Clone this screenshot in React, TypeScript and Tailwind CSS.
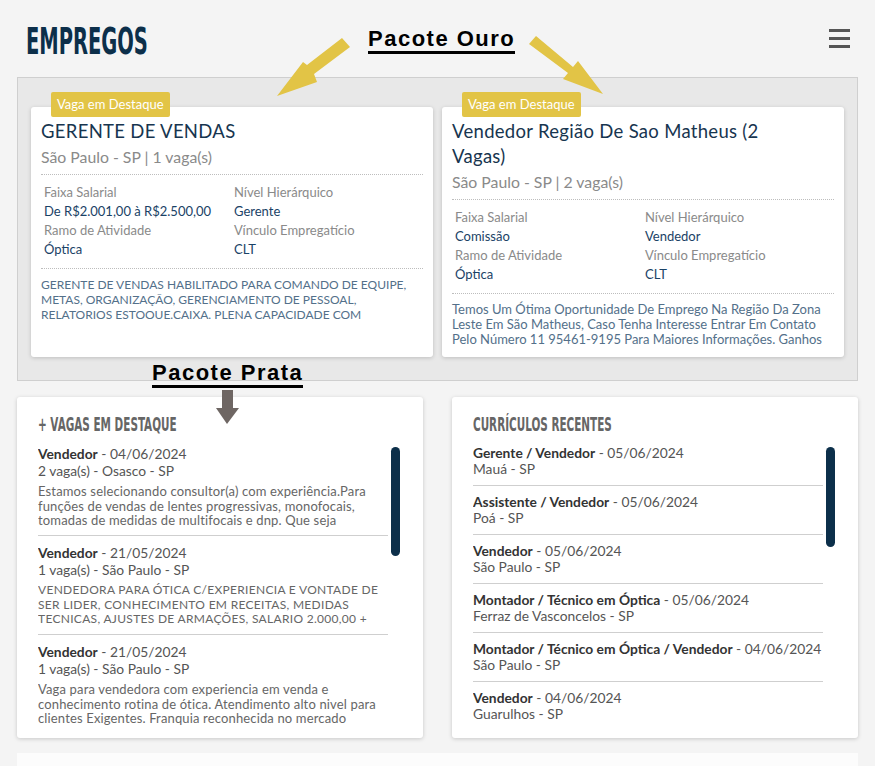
const body = { fontFamily: "Lato, 'Noto Sans', sans-serif" };
const cond = { fontFamily: "'Liberation Sans Narrow', 'DejaVu Sans Condensed', sans-serif" };
const anno = { fontFamily: "'Liberation Sans', Arial, sans-serif" };

type Destaque = {
  title: string[];
  city: string;
  salario: string;
  nivel: string;
  ramo: string;
  vinculo: string;
  desc: string[];
  upper?: boolean;
};

const destaques: Destaque[] = [
  {
    title: ["GERENTE DE VENDAS"],
    city: "São Paulo - SP | 1 vaga(s)",
    salario: "De R$2.001,00 à R$2.500,00",
    nivel: "Gerente",
    ramo: "Óptica",
    vinculo: "CLT",
    upper: true,
    desc: [
      "GERENTE DE VENDAS HABILITADO PARA COMANDO DE EQUIPE,",
      "METAS, ORGANIZAÇÃO, GERENCIAMENTO DE PESSOAL,",
      "RELATORIOS ESTOOUE.CAIXA. PLENA CAPACIDADE COM",
    ],
  },
  {
    title: ["Vendedor Região De Sao Matheus (2", "Vagas)"],
    city: "São Paulo - SP | 2 vaga(s)",
    salario: "Comissão",
    nivel: "Vendedor",
    ramo: "Óptica",
    vinculo: "CLT",
    desc: [
      "Temos Um Ótima Oportunidade De Emprego Na Região Da Zona",
      "Leste Em São Matheus, Caso Tenha Interesse Entrar Em Contato",
      "Pelo Número 11 95461-9195 Para Maiores Informações. Ganhos",
    ],
  },
];

const vagas = [
  {
    cargo: "Vendedor",
    data: "04/06/2024",
    local: "2 vaga(s) - Osasco - SP",
    desc: [
      "Estamos selecionando consultor(a) com experiência.Para",
      "funções de vendas de lentes progressivas, monofocais,",
      "tomadas de medidas de multifocais e dnp. Que seja",
    ],
  },
  {
    cargo: "Vendedor",
    data: "21/05/2024",
    local: "1 vaga(s) - São Paulo - SP",
    upper: true,
    desc: [
      "VENDEDORA PARA ÓTICA C/EXPERIENCIA E VONTADE DE",
      "SER LIDER, CONHECIMENTO EM RECEITAS, MEDIDAS",
      "TECNICAS, AJUSTES DE ARMAÇÕES, SALARIO 2.000,00 +",
    ],
  },
  {
    cargo: "Vendedor",
    data: "21/05/2024",
    local: "1 vaga(s) - São Paulo - SP",
    desc: [
      "Vaga para vendedora com experiencia em venda e",
      "conhecimento rotina de ótica. Atendimento alto nivel para",
      "clientes Exigentes. Franquia reconhecida no mercado",
    ],
  },
];

const curriculos = [
  ["Gerente / Vendedor", "05/06/2024", "Mauá - SP"],
  ["Assistente / Vendedor", "05/06/2024", "Poá - SP"],
  ["Vendedor", "05/06/2024", "São Paulo - SP"],
  ["Montador / Técnico em Óptica", "05/06/2024", "Ferraz de Vasconcelos - SP"],
  ["Montador / Técnico em Óptica / Vendedor", "04/06/2024", "São Paulo - SP"],
  ["Vendedor", "04/06/2024", "Guarulhos - SP"],
];

function DestaqueCard({ d }: { d: Destaque }) {
  return (
    <div className="relative w-[402px] shrink-0 rounded-[3px] bg-white px-[10px] pt-[12px] pb-[10px] shadow-[0_1px_4px_rgba(0,0,0,0.18)]">
      <span className="absolute -top-[15px] left-[20px] flex h-[25px] items-center rounded-[2px] bg-[#e2c446] px-[6px] text-[13px] text-white">
        Vaga em Destaque
      </span>
      {d.title.map((t) => (
        <div key={t} className="text-[18.5px] leading-[25px] tracking-[0.3px] text-[#17354f]">
          {t}
        </div>
      ))}
      <div className="mt-[2px] border-b border-dotted border-[#bdbdbd] pb-[6px] text-[15.8px] leading-[22px] text-[#8a8a8a]">
        {d.city}
      </div>
      <div className="grid grid-cols-[190px_1fr] border-b border-dotted border-[#bdbdbd] px-[3px] pt-[8px] pb-[9px] text-[13px] leading-[19px]">
        <span className="text-[#8a8a8a]">Faixa Salarial</span>
        <span className="text-[#8a8a8a]">Nível Hierárquico</span>
        <span className="text-[#1a4266]">{d.salario}</span>
        <span className="text-[#1a4266]">{d.nivel}</span>
        <span className="text-[#8a8a8a]">Ramo de Atividade</span>
        <span className="text-[#8a8a8a]">Vínculo Empregatício</span>
        <span className="text-[#1a4266]">{d.ramo}</span>
        <span className="text-[#1a4266]">{d.vinculo}</span>
      </div>
      <div className={`pt-[8px] leading-[15px] text-[#53708a] ${d.upper ? "text-[12px]" : "text-[13px]"}`}>
        {d.desc.map((l) => (
          <div key={l} className="whitespace-nowrap">
            {l}
          </div>
        ))}
      </div>
    </div>
  );
}

function ListCard({ title, thumb, children }: { title: string; thumb: string; children: React.ReactNode }) {
  return (
    <div className="flex h-[341px] w-[406px] flex-col rounded-[3px] bg-white pl-[21px] pr-[23px] shadow-[0_1px_4px_rgba(0,0,0,0.18)]">
      <div className="h-[40px] pt-[16px]">
        <span style={cond} className="inline-block origin-left scale-x-[0.61] whitespace-nowrap text-[19px] font-bold leading-[20px] text-[#666]">
          {title}
        </span>
      </div>
      <div className="flex h-[289px] gap-[3px]">
        <div className="h-full w-[350px] overflow-hidden">{children}</div>
        <div className={`mt-[10px] w-[9px] rounded-full bg-[#0c2f4a] ${thumb}`} />
      </div>
    </div>
  );
}

export default function App() {
  return (
    <div style={body} className="relative min-h-[766px] w-full overflow-hidden bg-[#f4f4f4]">
      <header className="flex h-[77px] items-start justify-between pl-[26px] pr-[25px] pt-[21px]">
        <h1 style={cond} className="inline-block origin-left scale-x-[0.57] whitespace-nowrap text-[38px] font-bold leading-[40px] text-[#0c2f4a]">
          EMPREGOS
        </h1>
        <div className="mt-[8px] flex w-[21px] flex-col gap-[5px]">
          <span className="h-[3px] bg-[#555]" />
          <span className="h-[3px] bg-[#555]" />
          <span className="h-[3px] bg-[#555]" />
        </div>
      </header>

      <section className="mx-[17px] flex w-[841px] gap-[9px] border border-[#cfcfcf] bg-[#e8e8e8] px-[13px] pt-[29px] pb-[23px]">
        {destaques.map((d) => (
          <DestaqueCard key={d.city} d={d} />
        ))}
      </section>

      <div className="mx-[17px] mt-[16px] flex w-[841px] gap-[29px]">
        <ListCard title="+ VAGAS EM DESTAQUE" thumb="h-[109px]">
          {vagas.map((v, i) => (
            <div key={i} className="border-b border-[#cfcfcf] pt-[8px] pb-[7.5px]">
              <div className="whitespace-nowrap text-[13.8px] leading-[17px] text-[#555]">
                <span className="font-bold text-[#333]">{v.cargo}</span> - {v.data}
              </div>
              <div className="text-[13.8px] leading-[17px] text-[#555]">{v.local}</div>
              <div
                className={`mt-[5px] leading-[14.5px] text-[#666] ${
                  v.upper ? "text-[12px] tracking-[0.3px]" : "text-[13px] tracking-[0.15px]"
                }`}
              >
                {v.desc.map((l) => (
                  <div key={l} className="whitespace-nowrap">
                    {l}
                  </div>
                ))}
              </div>
            </div>
          ))}
        </ListCard>
        <ListCard title="CURRÍCULOS RECENTES" thumb="h-[100px]">
          {curriculos.map(([c, d, l], i) => (
            <div key={i} className="border-b border-[#cfcfcf] py-[8px] last:border-b-0">
              <div className="whitespace-nowrap text-[13.8px] leading-[16px] text-[#555]">
                <span className="font-bold text-[#333]">{c}</span> - {d}
              </div>
              <div className="text-[13.8px] leading-[16px] text-[#555]">{l}</div>
            </div>
          ))}
        </ListCard>
      </div>

      <div className="mx-[17px] mt-[15px] h-[20px] w-[841px] bg-[#fcfcfc]" />

      {/* anotações sobre o print */}
      <span style={anno} className="absolute left-[368px] top-[26px] border-b-[3px] border-black text-[22px] font-bold leading-[25px] tracking-[1.5px] text-black">
        Pacote Ouro
      </span>
      <span style={anno} className="absolute left-[152px] top-[360px] border-b-[3px] border-black text-[22px] font-bold leading-[25px] tracking-[1.5px] text-black">
        Pacote Prata
      </span>
      <svg className="pointer-events-none absolute left-0 top-0" width="875" height="766">
        <polygon points="342,38 307,65 303,62 277,96 317,82 314,74 350,47" fill="#e2c446" />
        <polygon points="536,36 573,67 578,61 603,94 563,79 568,73 529,44" fill="#e2c446" />
        <polygon points="222,390 233,390 233,408 239,408 227,424 216,408 222,408" fill="#6e6663" />
      </svg>
    </div>
  );
}
